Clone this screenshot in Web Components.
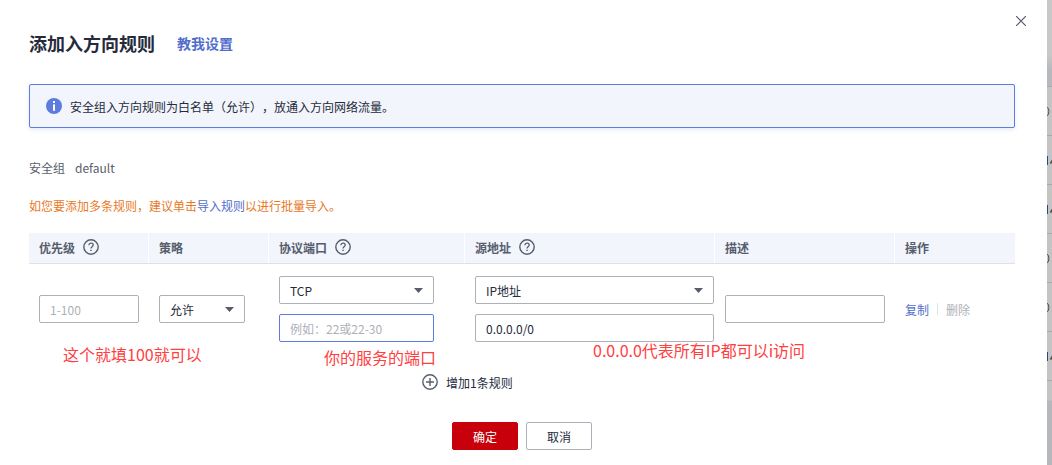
<!DOCTYPE html>
<html lang="zh">
<head>
<meta charset="utf-8">
<title>添加入方向规则</title>
<style>
  html, body { margin: 0; background: #fff; }
  body { width: 1052px; height: 465px; overflow: hidden; font: 12px "Noto Sans CJK SC", "Liberation Sans", sans-serif; color: #252b3a; text-spacing-trim: space-all; }
</style>
</head>
<body>
<rule-dialog>
  <span slot="title">添加入方向规则</span>
  <span slot="guide">教我设置</span>
  <info-notice slot="notice">安全组入方向规则为白名单（允许），放通入方向网络流量。</info-notice>
  <rule-table slot="table"></rule-table>
  <action-button slot="footer" primary>确定</action-button>
  <action-button slot="footer">取消</action-button>
</rule-dialog>

<script>
const QUESTION_ICON = `<svg width="16" height="16" viewBox="0 0 16 16" fill="none" stroke="#575d6c"><circle cx="8" cy="8" r="7.2" stroke-width="1.4"/><path d="M5.9 6.2c0-1.3 1-2.1 2.2-2.1s2.1.8 2.1 1.9c0 1.7-2.2 1.7-2.2 3.5" stroke-width="1.3"/><path d="M8 10.7v1.4" stroke-width="1.5"/></svg>`;

class InfoNotice extends HTMLElement {
  constructor() {
    super();
    this.attachShadow({ mode: "open" });
    this.shadowRoot.innerHTML = `
    <style>
      :host {
        display: flex;
        align-items: center;
        gap: 8px;
        box-sizing: border-box;
        height: 44px;
        padding-left: 16px;
        background: #f2f5fc;
        border: 1px solid #5e7ce0;
        border-radius: 2px;
        box-shadow: 0 2px 4px rgba(94, 124, 224, .15);
      }
      svg { display: block; }
    </style>
    <svg width="16" height="16" viewBox="0 0 16 16"><circle cx="8" cy="8" r="8" fill="#5e7ce0"/><rect x="7" y="3" width="2" height="2" fill="#fff"/><rect x="7" y="6.4" width="2" height="6.4" fill="#fff"/></svg>
    <span><slot></slot></span>
    `;
  }
}

class FieldBox extends HTMLElement {
  constructor() {
    super();
    this.attachShadow({ mode: "open" });
    const arrow = this.hasAttribute("select")
      ? `<svg width="9" height="5" viewBox="0 0 9 5"><path d="M0 0h9L4.5 5z" fill="#575d6c"/></svg>`
      : "";
    this.shadowRoot.innerHTML = `
    <style>
      :host {
        display: flex;
        align-items: center;
        justify-content: space-between;
        box-sizing: border-box;
        height: 28px;
        padding: 0 10px;
        background: #fff;
        border: 1px solid #adb0b8;
        border-radius: 2px;
        color: #252b3a;
      }
      :host([placeholder]) { color: #adb0b8; }
      :host([focused]) { border-color: #5e7ce0; }
    </style>
    <span><slot></slot></span>${arrow}
    `;
  }
}

class HeadCell extends HTMLElement {
  constructor() {
    super();
    this.attachShadow({ mode: "open" });
    this.shadowRoot.innerHTML = `
    <style>
      :host {
        display: flex;
        align-items: center;
        gap: 8px;
        padding-left: 10px;
        background: #f2f5fc;
        color: #575d6c;
        font-weight: 700;
      }
      span { margin-top: -2px; }
      svg { display: block; margin-top: -3px; }
    </style>
    <span><slot></slot></span>${this.hasAttribute("help") ? QUESTION_ICON : ""}
    `;
  }
}

class RuleTable extends HTMLElement {
  constructor() {
    super();
    this.attachShadow({ mode: "open" });
    this.shadowRoot.innerHTML = `
    <style>
      :host { display: block; position: relative; }
      .head, .body {
        display: grid;
        grid-template-columns: 119px 119px 195px 249px 179px 120px;
        column-gap: 1px;
      }
      .head { height: 30px; border-bottom: 1px solid #dfe1e6; }
      .body { padding-top: 12px; align-items: center; }
      .cell { padding-left: 10px; }
      .stack { display: flex; flex-direction: column; gap: 10px; }
      .w99 { width: 100px; }
      .w86 { width: 86px; }
      .w155 { width: 155px; }
      .w160 { width: 160px; }
      .ops { display: flex; align-items: center; color: #526ecc; }
      .ops i { width: 1px; height: 12px; margin: 0 8px; background: #dfe1e6; }
      .ops b { font-weight: 400; color: #adb0b8; }
      .add {
        display: flex;
        align-items: center;
        gap: 8px;
        margin-top: 32px;
        padding-left: 393px;
        height: 16px;
      }
      svg { display: block; }
      .note { position: absolute; color: #ff4040; font-size: 16px; line-height: 22px; white-space: nowrap; }
    </style>
    <div class="head">
      <head-cell help>优先级</head-cell>
      <head-cell>策略</head-cell>
      <head-cell help>协议端口</head-cell>
      <head-cell help>源地址</head-cell>
      <head-cell>描述</head-cell>
      <head-cell>操作</head-cell>
    </div>
    <div class="body">
      <div class="cell"><field-box class="w99" placeholder>1-100</field-box></div>
      <div class="cell"><field-box class="w86" select>允许</field-box></div>
      <div class="cell stack">
        <field-box class="w155" select>TCP</field-box>
        <field-box class="w155" placeholder focused>例如：22或22-30</field-box>
      </div>
      <div class="cell stack">
        <field-box select>IP地址</field-box>
        <field-box>0.0.0.0/0</field-box>
      </div>
      <div class="cell"><field-box class="w160"></field-box></div>
      <div class="cell ops"><span>复制</span><i></i><b>删除</b></div>
    </div>
    <div class="add">
      <svg width="16" height="16" viewBox="0 0 16 16" fill="none" stroke="#575d6c" stroke-width="1.4"><circle cx="8" cy="8" r="7.2"/><path d="M4 8h8M8 4v8"/></svg>
      <span>增加1条规则</span>
    </div>
    <span class="note" style="left:34px;top:110px">这个就填100就可以</span>
    <span class="note" style="left:295px;top:113px">你的服务的端口</span>
    <span class="note" style="left:564px;top:106px">0.0.0.0代表所有IP都可以i访问</span>
    `;
  }
}

class ActionButton extends HTMLElement {
  constructor() {
    super();
    this.attachShadow({ mode: "open" });
    this.shadowRoot.innerHTML = `
    <style>
      :host {
        display: flex;
        align-items: center;
        justify-content: center;
        box-sizing: border-box;
        width: 66px;
        height: 28px;
        background: #fff;
        border: 1px solid #adb0b8;
        border-radius: 2px;
        color: #252b3a;
      }
      :host([primary]) { background: #c7000b; border-color: #c7000b; color: #fff; }
    </style>
    <slot></slot>
    `;
  }
}

// the sliver of the page behind the dialog, at the right edge
class BackdropStrip extends HTMLElement {
  constructor() {
    super();
    this.attachShadow({ mode: "open" });
    const curve = c => `<svg width="5" height="9" viewBox="0 0 5 9" fill="none" stroke="${c}" stroke-width="1"><path d="M0 .5c1.4 0 1.8 1.8 1.8 4S1.4 8.5 0 8.5"/></svg>`;
    const tick = `<svg width="5" height="9" viewBox="0 0 5 9"><rect width="1" height="9" fill="#1f4e86"/><path d="M2.5 7.5L5 3.5v4z" fill="#5a4a30"/></svg>`;
    const marks = [curve("#5a4a30"), tick, tick, curve("#39465f"), curve("#39465f"), tick];
    const rows = marks.map(m => `<div class="row">${m}</div>`).join("");
    this.shadowRoot.innerHTML = `
    <style>
      :host {
        display: block;
        width: 5px;
        overflow: hidden;
        background: linear-gradient(#c8c8c8 55px, #b6b8be 70px, #b6b8be 86px, #c4c4c4 86px, #c4c4c4 400px, #b6b7bd 401px);
      }
      .top { height: 86px; }
      .row {
        display: flex;
        align-items: center;
        height: 49px;
        box-sizing: border-box;
        border-top: 1px solid #a9a9a9;
      }
      .row:last-child { border-bottom: 1px solid #a9a9a9; height: 50px; }
      svg { display: block; flex: none; }
    </style>
    <div class="top"></div>
    ${rows}
    `;
  }
}

class RuleDialog extends HTMLElement {
  constructor() {
    super();
    this.attachShadow({ mode: "open" });
    this.shadowRoot.innerHTML = `
    <style>
      :host { display: flex; height: 465px; }
      .panel { position: relative; flex: 1; box-sizing: border-box; padding: 31px 32px 0 29px; background: #fff; }
      .close { position: absolute; left: 1016px; top: 16px; display: block; }
      .titlebar { display: flex; align-items: center; gap: 22px; height: 24px; }
      .title { font-size: 18px; font-weight: 700; line-height: 24px; }
      .guide { font-size: 14px; font-weight: 700; color: #526ecc; }
      .notice { margin-top: 29px; }
      .group { display: flex; gap: 10px; margin-top: 31px; height: 17px; line-height: 17px; color: #575d6c; }
      .tip { margin-top: 21px; height: 17px; line-height: 17px; color: #e8791f; }
      .tip a { color: #526ecc; }
      .table { margin-top: 19px; }
      .footer { display: flex; justify-content: center; gap: 8px; margin-top: 32px; }
    </style>
    <div class="panel">
      <svg class="close" width="10" height="10" viewBox="0 0 10 10" stroke="#575d6c" stroke-width="1.2"><path d="M0 0l10 10M10 0L0 10"/></svg>
      <div class="titlebar">
        <span class="title"><slot name="title"></slot></span>
        <span class="guide"><slot name="guide"></slot></span>
      </div>
      <div class="notice"><slot name="notice"></slot></div>
      <div class="group"><span>安全组</span><span>default</span></div>
      <div class="tip">如您要添加多条规则，建议单击<a>导入规则</a>以进行批量导入。</div>
      <div class="table"><slot name="table"></slot></div>
      <div class="footer"><slot name="footer"></slot></div>
    </div>
    <backdrop-strip></backdrop-strip>
    `;
  }
}

customElements.define("info-notice", InfoNotice);
customElements.define("field-box", FieldBox);
customElements.define("head-cell", HeadCell);
customElements.define("rule-table", RuleTable);
customElements.define("action-button", ActionButton);
customElements.define("backdrop-strip", BackdropStrip);
customElements.define("rule-dialog", RuleDialog);
</script>
</body>
</html>
